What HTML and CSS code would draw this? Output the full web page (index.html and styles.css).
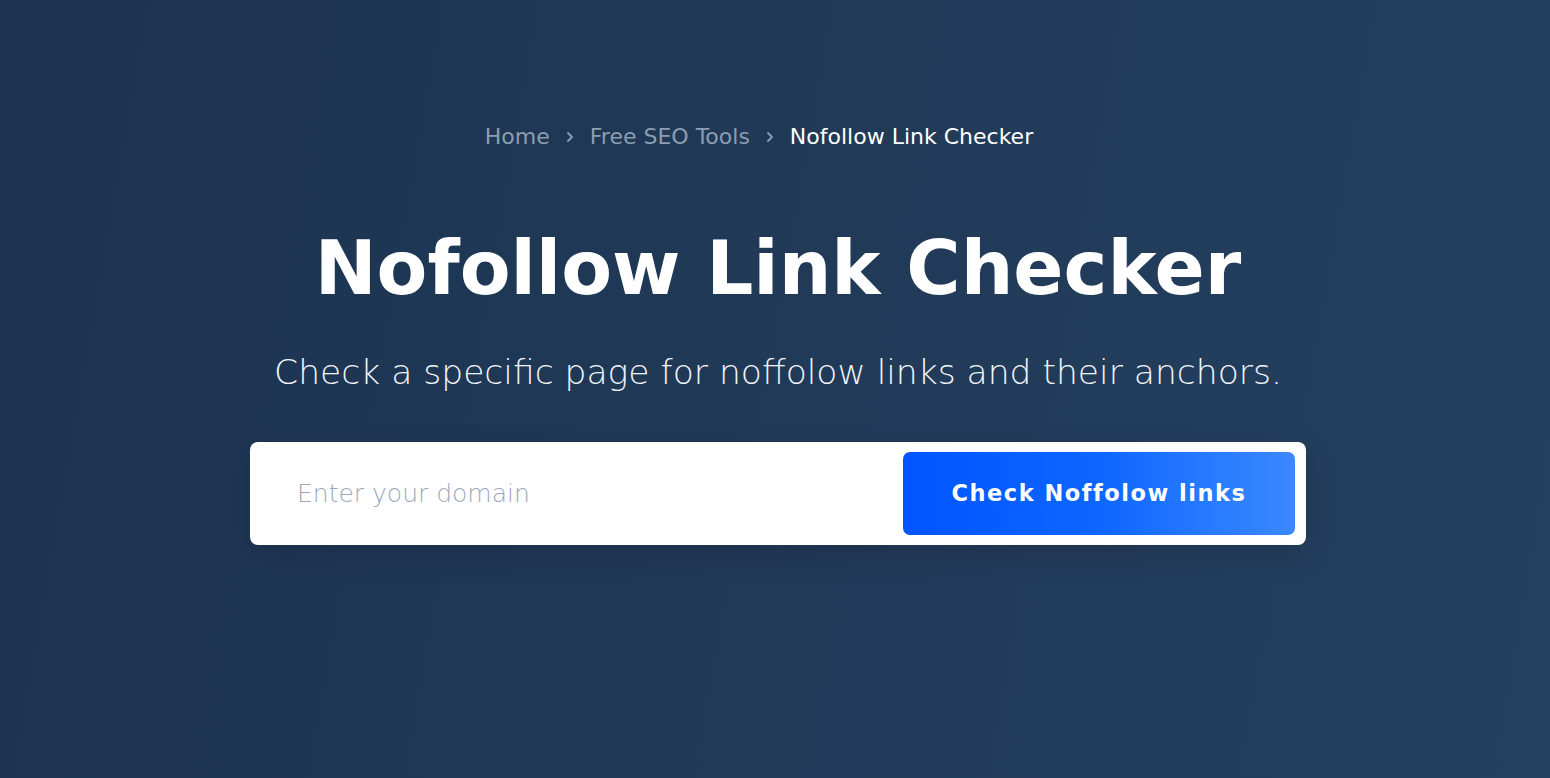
FILE: index.html
```html
<!DOCTYPE html>
<html lang="en">
<head>
  <meta charset="UTF-8">
  <meta name="viewport" content="width=device-width, initial-scale=1.0">
  <title>Nofollow Link Checker</title>
  <link rel="stylesheet" href="styles.css">
</head>
<body>
  <section class="hero">
    <nav class="breadcrumb">
      <a href="#">Home</a>
      <svg class="chevron" width="10" height="12" viewBox="0 0 10 12"><path d="M3 2l4 4-4 4" fill="none" stroke="currentColor" stroke-width="1.8" stroke-linecap="round" stroke-linejoin="round"/></svg>
      <a href="#">Free SEO Tools</a>
      <svg class="chevron" width="10" height="12" viewBox="0 0 10 12"><path d="M3 2l4 4-4 4" fill="none" stroke="currentColor" stroke-width="1.8" stroke-linecap="round" stroke-linejoin="round"/></svg>
      <span class="current">Nofollow Link Checker</span>
    </nav>

    <h1>Nofollow Link Checker</h1>
    <p class="lead">Check a specific page for noffolow links and their anchors.</p>

    <form class="check-form">
      <input type="text" placeholder="Enter your domain">
      <button type="submit">Check Noffolow links</button>
    </form>
  </section>
</body>
</html>
```

FILE: styles.css
```css
body {
  margin: 0;
  padding: 0;
  font-family: "DejaVu Sans", sans-serif;
  background: linear-gradient(100deg, #1b3350 0%, #25405f 100%);
  min-height: 100vh;
}

.hero {
  display: flex;
  flex-direction: column;
  align-items: center;
  padding: 124px 0 0 6px;
}

.breadcrumb {
  display: flex;
  align-items: center;
  gap: 15px;
  padding-right: 38px;
  font-size: 22px;
  color: #8d9db2;
}

.breadcrumb a {
  color: #8d9db2;
  text-decoration: none;
}

.chevron {
  color: #8d9db2;
}

.breadcrumb .current {
  color: #ffffff;
}

h1 {
  margin: 75px 0 0;
  color: #ffffff;
  font-size: 74px;
  font-weight: 700;
  line-height: 1.2;
}

.lead {
  margin: 39px 0 0;
  color: #f1f4f8;
  font-size: 34.5px;
  font-weight: 300;
}

.check-form {
  margin-top: 50px;
  width: 1036px;
  display: flex;
  align-items: center;
  padding: 10px 11px 10px 9px;
  background: #ffffff;
  border-radius: 8px;
  box-shadow: 0 10px 30px rgba(0, 0, 0, 0.12);
}

.check-form input {
  flex: 1;
  border: none;
  outline: none;
  padding: 0 0 0 38px;
  font-family: inherit;
  font-size: 25px;
  font-weight: 200;
  color: #334;
}

.check-form input::placeholder {
  color: #9aa8bc;
}

.check-form button {
  width: 392px;
  height: 83px;
  border: none;
  border-radius: 7px;
  background: linear-gradient(90deg, #0055ff 0%, #0e66ff 50%, #3b89ff 100%);
  color: #ffffff;
  font-family: inherit;
  font-size: 22.5px;
  font-weight: 700;
  letter-spacing: 1.5px;
  cursor: pointer;
}
```
